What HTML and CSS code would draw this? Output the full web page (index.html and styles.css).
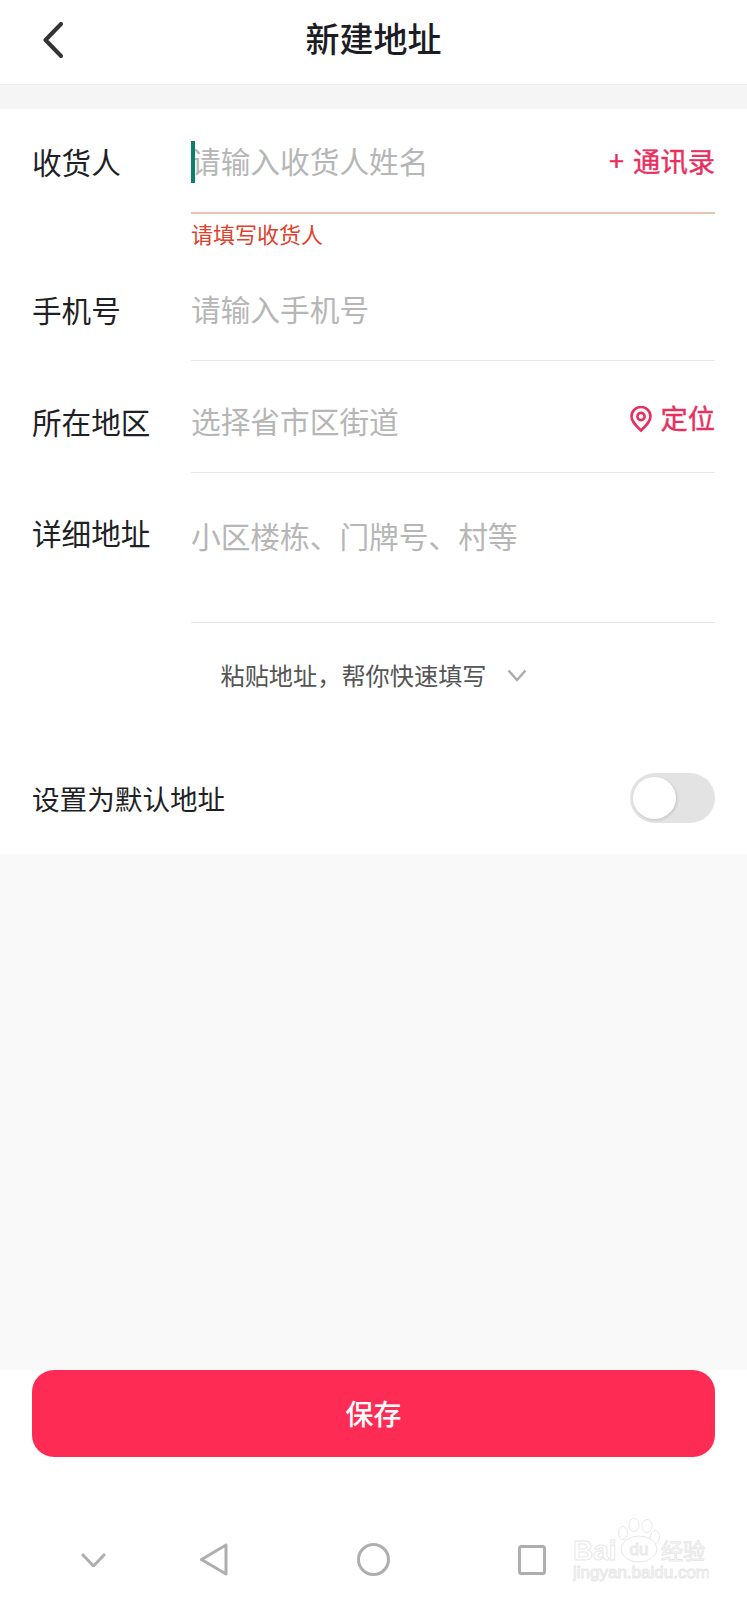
FILE: index.html
```html
<!DOCTYPE html>
<html lang="zh-CN">

<head>
    <meta charset="UTF-8">
    <meta name="viewport" content="width=device-width, initial-scale=1.0">
    <title>新建地址</title>
    <link rel="stylesheet" href="styles.css">
</head>

<body>
    <div class="page">
        <header class="header">
            <svg class="back-icon" width="20" height="36" viewBox="0 0 20 36">
                <path d="M18 2 L2.5 18 L18 34" />
            </svg>
            <h1 class="title">新建地址</h1>
        </header>
        <div class="band"></div>

        <form class="form">
            <div class="field field-name">
                <span class="field-label">收货人</span>
                <div class="field-body">
                    <span class="caret"></span>
                    <span class="hint">请输入收货人姓名</span>
                    <span class="field-action"><span class="plus">+</span>通讯录</span>
                </div>
            </div>
            <p class="error-text">请填写收货人</p>

            <div class="field field-phone">
                <span class="field-label">手机号</span>
                <div class="field-body">
                    <span class="hint">请输入手机号</span>
                </div>
            </div>

            <div class="field field-area">
                <span class="field-label">所在地区</span>
                <div class="field-body">
                    <span class="hint">选择省市区街道</span>
                    <span class="field-action locate">
                        <svg class="pin-icon" width="22" height="26" viewBox="0 0 22 26">
                            <path d="M11 24.5 C6 19.5 1.5 15.5 1.5 10.5 A9.5 9.5 0 0 1 20.5 10.5 C20.5 15.5 16 19.5 11 24.5 Z" />
                            <circle cx="11" cy="10.5" r="3.6" />
                        </svg>
                        定位
                    </span>
                </div>
            </div>

            <div class="field field-detail">
                <span class="field-label">详细地址</span>
                <div class="field-body">
                    <span class="hint">小区楼栋、门牌号、村等</span>
                </div>
            </div>

            <div class="paste-row">
                <span>粘贴地址，帮你快速填写</span>
                <svg class="paste-icon" width="20" height="13" viewBox="0 0 20 13">
                    <path d="M1.5 1.5 L10 11 L18.5 1.5" />
                </svg>
            </div>

            <div class="default-row">
                <span class="default-label">设置为默认地址</span>
                <span class="switch"><span class="switch-knob"></span></span>
            </div>
        </form>

        <div class="filler"></div>

        <footer class="footer">
            <button class="save-btn" type="button">保存</button>
            <nav class="nav-bar">
                <svg class="nav-down" width="25" height="14" viewBox="0 0 25 14">
                    <path d="M1 1 L12.5 13 L24 1" />
                </svg>
                <svg class="nav-back" width="28" height="33" viewBox="0 0 28 33">
                    <path d="M26 2 L1.5 16.5 L26 31 Z" />
                </svg>
                <svg class="nav-home" width="33" height="33" viewBox="0 0 33 33">
                    <circle cx="16.5" cy="16.5" r="15" />
                </svg>
                <svg class="nav-recent" width="28" height="30" viewBox="0 0 28 30">
                    <rect x="1.5" y="1.5" width="25" height="27" rx="2" />
                </svg>
            </nav>
        </footer>

        <svg class="watermark" width="136" height="68" viewBox="0 0 136 68">
            <text class="wm-brand" x="0" y="42">Bai</text>
            <ellipse cx="50" cy="15" rx="4.5" ry="6.5" />
            <ellipse cx="61" cy="7" rx="5" ry="6.5" />
            <ellipse cx="74" cy="8" rx="5" ry="6.5" />
            <ellipse cx="82" cy="19" rx="4.5" ry="6.5" />
            <ellipse cx="66" cy="31" rx="18" ry="13" />
            <text class="wm-du" x="66" y="37">du</text>
            <text class="wm-cn" x="88" y="41">经验</text>
            <text class="wm-url" x="0" y="60">jingyan.baidu.com</text>
        </svg>
    </div>
</body>

</html>
```

FILE: styles.css
```css
* {
    box-sizing: border-box;
}

body {
    margin: 0;
    font-family: "Noto Sans CJK SC", "Noto Sans", sans-serif;
    background-color: #fff;
}

.page {
    position: relative;
    display: flex;
    flex-direction: column;
    width: 747px;
    height: 1599px;
    overflow: hidden;
}

.header {
    display: flex;
    align-items: center;
    justify-content: center;
    position: relative;
    height: 85px;
    border-bottom: 1px solid #ececec;
    background-color: #fff;
}

.band {
    height: 24px;
    background-color: #f5f5f5;
}

.back-icon {
    position: absolute;
    left: 43px;
    top: 22px;
}

.back-icon path {
    fill: none;
    stroke: #333;
    stroke-width: 4;
    stroke-linecap: round;
    stroke-linejoin: round;
}

.title {
    margin: 0;
    font-size: 34px;
    font-weight: 500;
    line-height: 48px;
    color: #1c1c24;
    position: relative;
    top: -4px;
}

.form {
    padding: 0 32px 31px;
    background-color: #fff;
}

.field {
    display: flex;
    align-items: flex-start;
}

.field-label {
    flex: 0 0 159px;
    font-size: 29.6px;
    line-height: 40px;
    color: #1f1f26;
    margin-top: calc(var(--top) + 2px);
}

.field-body {
    flex: 1;
    display: flex;
    justify-content: space-between;
    position: relative;
    padding-top: var(--top);
    height: var(--h);
    border-bottom: 1px solid #e8e8e8;
    font-size: 29.7px;
    line-height: 40px;
}

.field-name {
    --top: 31px;
    --h: 105px;
}

.field-name .field-body {
    border-bottom: 2px solid #e8c4b4;
}

.field-phone {
    --top: 0px;
    --h: 73px;
    margin-top: 40px;
}

.field-area {
    --top: 0px;
    --h: 73px;
    margin-top: 39px;
}

.field-detail {
    --top: 0px;
    --h: 112px;
    margin-top: 38px;
}

.hint {
    margin-top: 1px;
    color: #b6b6b6;
}

.field-detail .hint {
    margin-top: 5px;
}

.caret {
    position: absolute;
    left: 0;
    top: 32px;
    width: 4px;
    height: 42px;
    background-color: #0b7f6b;
}

.field-action {
    display: flex;
    align-items: center;
    position: relative;
    top: 0;
    height: 40px;
    font-size: 27.3px;
    color: #e8305f;
    -webkit-text-stroke: 0.4px #e8305f;
}

.plus {
    margin-right: 9px;
    font-size: 27px;
}

.locate {
    top: -3px;
    gap: 8px;
}

.pin-icon {
    position: relative;
    top: 2px;
}

.pin-icon path,
.pin-icon circle {
    fill: none;
    stroke: #e8305f;
    stroke-width: 2.6;
}

.error-text {
    margin: 4px 0 0 159px;
    font-size: 22px;
    line-height: 30px;
    color: #e0402c;
}

.paste-row {
    display: flex;
    align-items: center;
    justify-content: center;
    gap: 20px;
    margin-top: 35px;
    font-size: 24.2px;
    line-height: 34px;
    color: #555;
}

.paste-icon path {
    fill: none;
    stroke: #aaa;
    stroke-width: 2.4;
}

.default-row {
    display: flex;
    align-items: center;
    justify-content: space-between;
    margin-top: 81px;
}

.default-label {
    font-size: 27.6px;
    line-height: 40px;
    color: #1f1f26;
}

.switch {
    display: block;
    position: relative;
    width: 85px;
    height: 50px;
    border-radius: 25px;
    background-color: #e3e3e3;
}

.switch-knob {
    position: absolute;
    left: 3px;
    top: 4px;
    width: 43px;
    height: 42px;
    border-radius: 50%;
    background-color: #fff;
    box-shadow: 1px 1px 3px rgba(0, 0, 0, 0.15);
}

.filler {
    flex: 1;
    background-color: #f9f9f9;
}

.footer {
    padding: 0 32px;
    height: 229px;
    background-color: #fff;
}

.save-btn {
    display: block;
    width: 100%;
    height: 87px;
    padding-bottom: 2px;
    border: none;
    border-radius: 22px;
    background-color: #fe2c55;
    color: #fff;
    font-family: inherit;
    font-size: 28px;
    font-weight: 500;
}

.nav-bar {
    display: flex;
    align-items: center;
    gap: 94px;
    margin-top: 86px;
    padding-left: 49px;
}

.nav-back {
    margin-right: 35px;
}

.nav-home {
    margin-right: 34px;
}

.nav-bar path,
.nav-bar circle,
.nav-bar rect {
    fill: none;
    stroke: #aeaeae;
    stroke-width: 3;
    stroke-linejoin: round;
}

.watermark {
    position: absolute;
    left: 573px;
    top: 1518px;
}

.watermark ellipse,
.watermark text {
    fill: #fff;
    stroke: #e8e8e8;
    stroke-width: 1;
}

.wm-brand {
    font-family: "Liberation Sans", sans-serif;
    font-size: 28px;
    font-weight: 700;
}

.wm-du {
    font-family: "Liberation Sans", sans-serif;
    font-size: 17px;
    text-anchor: middle;
}

.wm-cn {
    font-size: 22px;
}

.wm-url {
    font-family: "Liberation Sans", sans-serif;
    font-size: 17px;
}
```
